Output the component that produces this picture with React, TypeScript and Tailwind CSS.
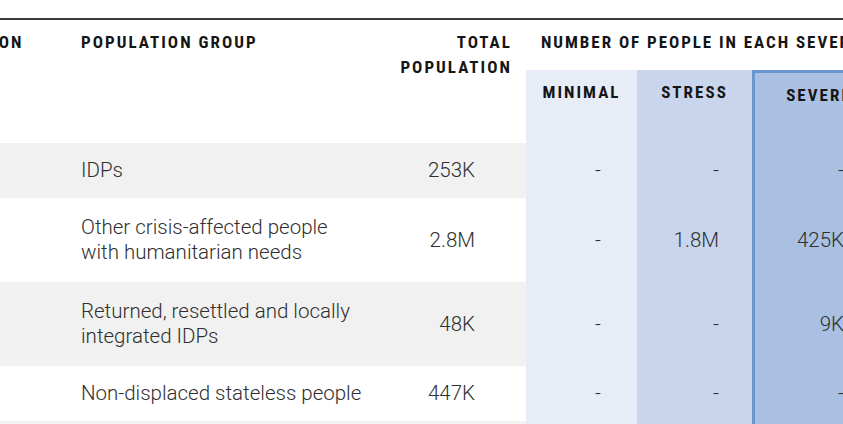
const rows = [
  { group: ["IDPs"], total: "253K", minimal: "-", stress: "-", severe: "-", gray: true, tall: false },
  {
    group: ["Other crisis-affected people", "with humanitarian needs"],
    total: "2.8M",
    minimal: "-",
    stress: "1.8M",
    severe: "425K",
    gray: false,
    tall: true,
  },
  {
    group: ["Returned, resettled and locally", "integrated IDPs"],
    total: "48K",
    minimal: "-",
    stress: "-",
    severe: "9K",
    gray: true,
    tall: true,
  },
  { group: ["Non-displaced stateless people"], total: "447K", minimal: "-", stress: "-", severe: "-", gray: false, tall: false },
  { group: ["Refugees"], total: "-", minimal: "-", stress: "-", severe: "-", gray: true, tall: false },
];

const head = "font-['Roboto_Condensed',Roboto,sans-serif] font-bold text-[17px] leading-[25px] tracking-[0.12em] text-[#151515] pt-[10px]";
const body = "font-[Roboto,sans-serif] font-light text-[20.5px] leading-[25px] text-[#2f2f2f]";

export default function App() {
  return (
    <div className="w-[843px] h-[424px] overflow-hidden bg-white pt-[18px]">
      <div className="-ml-[64px] w-[1000px] border-t-2 border-[#3c3c3c] grid grid-cols-[145px_300px_145px_111px_115px_184px]">
        {/* header row 1 */}
        <div className={`${head} h-[50px]`}>LOCATION</div>
        <div className={`${head} h-[50px]`}>POPULATION GROUP</div>
        <div className={`${head} row-span-2 text-right pr-[14px]`}>
          TOTAL
          <br />
          POPULATION
        </div>
        <div className={`${head} col-span-3 pl-[15px] whitespace-nowrap h-[50px] tracking-[0.115em]`}>
          NUMBER OF PEOPLE IN EACH SEVERITY PHASE
        </div>

        {/* header row 2 */}
        <div className="h-[73px]" />
        <div className="h-[73px]" />
        <div className={`${head} bg-[#e8ecf6] text-center`}>MINIMAL</div>
        <div className={`${head} bg-[#c8d5ec] text-center`}>STRESS</div>
        <div className={`${head} bg-[#a9c0e2] border-x-[3px] border-t-[3px] border-[#6996cc] text-center pr-[50px]`}>
          SEVERE
        </div>

        {rows.map((r, i) => {
          const rowBg = r.gray ? "bg-[#f0f1f0]" : "bg-white";
          const h = r.tall ? "h-[84px]" : "h-[55px]";
          return (
            <div key={i} className="contents">
              <div className={`${rowBg} ${h}`} />
              <div className={`${rowBg} ${h} ${body} flex flex-col justify-center`}>
                {r.group.map((g) => (
                  <span key={g}>{g}</span>
                ))}
              </div>
              <div className={`${rowBg} ${h} ${body} flex items-center justify-end pr-[51px]`}>{r.total}</div>
              <div className={`bg-[#e8ecf6] ${h} ${body} flex items-center justify-end pr-[36px]`}>{r.minimal}</div>
              <div className={`bg-[#c8d5ec] ${h} ${body} flex items-center justify-end pr-[33px]`}>{r.stress}</div>
              <div className={`bg-[#a9c0e2] ${h} ${body} border-x-[3px] border-[#6996cc] flex items-center justify-end pr-[89px]`}>
                {r.severe}
              </div>
            </div>
          );
        })}
      </div>
    </div>
  );
}
